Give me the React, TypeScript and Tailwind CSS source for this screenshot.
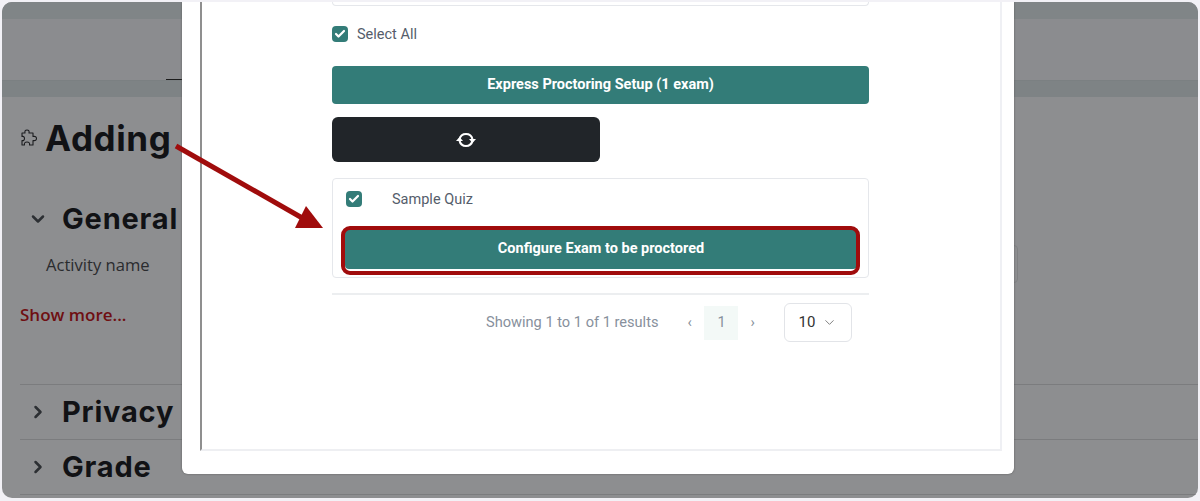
import React from "react";
import { ChevronDown, ChevronRight, Check } from "lucide-react";

const CheckBox = () => (
  <span className="flex h-4 w-4 shrink-0 items-center justify-center rounded-[4px] bg-[#337c78]">
    <Check className="h-[12px] w-[12px] text-white" strokeWidth={4.5} />
  </span>
);

const Section = ({ title, top }: { title: string; top: string }) => (
  <div className={`flex h-[55px] items-center border-t border-[#7b7c7e] ${top}`}>
    <ChevronRight className="ml-[8px] h-[20px] w-[20px] text-[#2c2f33]" strokeWidth={3} />
    <span className="ml-[14px] font-['Inter'] text-[29px] font-bold tracking-[0.8px] text-[#111215]">{title}</span>
  </div>
);

const PuzzleIcon = () => (
  <svg width="18" height="18" viewBox="0 0 18 18" fill="none" stroke="#1c1d20" strokeWidth="1.1" strokeLinejoin="round">
    <path d="M2 4H5C4.5 1.5 5.5 1 7 1C8.5 1 9.5 1.5 9 4H13V7.5C15.5 7 16.5 8 16.5 9.5C16.5 11 15.5 12 13 11.5V16H9.5C10 14 9 13 7 13C5 13 4 14 4.5 16H2V11.5C3.5 12 4.5 11 4.5 9.5C4.5 8 3.5 7 2 7.5Z" />
  </svg>
);

const SyncIcon = () => (
  <svg width="20" height="18" viewBox="0 0 20 18" fill="none">
    <path d="M3.6 8A6.6 6.6 0 0 1 16.4 8" stroke="white" strokeWidth="2.2" />
    <path d="M16.4 10A6.6 6.6 0 0 1 3.6 10" stroke="white" strokeWidth="2.2" />
    <polygon points="13,8 20,8 16.5,12" fill="white" />
    <polygon points="0,10 7,10 3.5,6" fill="white" />
  </svg>
);

const Background = () => (
  <div className="flex h-full flex-col bg-[#8d8e90]">
    <div className="h-[17px] bg-[#808587]" />
    <div className="flex h-[61px] items-end bg-[#8b8c8f]">
      <div className="ml-[164px] h-[1px] w-[20px] bg-[#1c1c1c]" />
    </div>
    <div className="h-[17px] border-t border-[#7b8082] bg-[#7e8385]" />
    <div className="flex flex-col pl-[18px]">
      <div className="mt-[19px] flex items-center">
        <PuzzleIcon />
        <span className="ml-[7px] font-['Inter'] text-[35px] leading-[44px] font-bold tracking-[0.6px] text-[#111215]">Adding</span>
      </div>
      <div className="mt-[37px] flex h-[44px] items-center">
        <ChevronDown className="ml-[8px] h-[20px] w-[20px] text-[#2c2f33]" strokeWidth={3} />
        <span className="ml-[14px] font-['Inter'] text-[29px] font-bold tracking-[0.8px] text-[#111215]">General</span>
      </div>
      <div className="mt-[4px] flex h-[38px] items-center">
        <span className="ml-[26px] pt-[2px] font-['Open_Sans'] text-[16.6px] text-[#2a2b2e]">Activity name</span>
        <div className="ml-[296px] h-[38px] w-[572px] rounded-[4px] border border-[#7f8082]" />
      </div>
      <div className="mt-[20px] font-['Open_Sans'] text-[17px] leading-[24px] font-semibold text-[#6f0f12]">Show more...</div>
      <Section title="Privacy" top="mt-[57px]" />
      <Section title="Grade" top="" />
      <div className="border-t border-[#7b7c7e]" />
    </div>
  </div>
);

const Modal = () => (
  <div className="absolute top-0 left-[180px] h-[472px] w-[832px] rounded-b-[6px] bg-white pl-[18px] font-['Roboto'] shadow-[0_0_2px_#555]">
    <div className="h-[449px] w-[802px] border-r-[2px] border-b-[2px] border-l-[2px] border-r-[#eff0f4] border-b-[#eeeff2] border-l-[#8f8f8f] pl-[130px]">
      <div className="w-[537px]">
        <div className="h-[4px] rounded-b-[4px] border-x border-b border-[#e5e7eb]" />
        <div className="mt-[20px] flex h-[16px] items-center">
          <CheckBox />
          <span className="ml-[9px] pt-[2px] text-[14.5px] text-[#555d6b]">Select All</span>
        </div>
        <button className="mt-[24px] block h-[38px] w-full rounded-[4px] bg-[#337c78] text-[14.5px] font-bold text-white">
          Express Proctoring Setup (1 exam)
        </button>
        <button className="mt-[13px] flex h-[45px] w-[268px] items-center justify-center rounded-[6px] bg-[#212529]">
          <SyncIcon />
        </button>
        <div className="mt-[16px] h-[100px] rounded-[4px] border border-[#e5e7eb]">
          <div className="mt-[12px] ml-[13px] flex h-[16px] items-center">
            <CheckBox />
            <span className="ml-[30px] pt-[2px] text-[14.5px] text-[#555d6b]">Sample Quiz</span>
          </div>
          <button className="mt-[22px] ml-[12px] block h-[40px] w-[512px] rounded-[4px] bg-[#337c78] text-[14.5px] font-bold text-white">
            Configure Exam to be proctored
          </button>
        </div>
        <div className="mt-[15px] flex h-[57px] items-center border-t-2 border-[#eceef0]">
          <span className="ml-[154px] text-[14.6px] text-[#87909c]">Showing 1 to 1 of 1 results</span>
          <span className="ml-[29px] w-[6px] text-[14.5px] text-[#87909c]">‹</span>
          <span className="ml-[11px] flex h-[34px] w-[34px] items-center justify-center bg-[#f3f9f7] text-[14.5px] text-[#87909c]">1</span>
          <span className="ml-[12px] w-[6px] text-[14.5px] text-[#87909c]">›</span>
          <div className="ml-[28px] flex h-[39px] w-[68px] items-center rounded-[6px] border border-[#e2e4e8] pl-[13px] text-[15px] text-[#333]">
            10
            <ChevronDown className="ml-[7px] h-[15px] w-[15px] text-[#777]" strokeWidth={1.5} />
          </div>
        </div>
      </div>
    </div>
  </div>
);

export default function App() {
  return (
    <div className="h-[501px] w-[1200px] overflow-hidden bg-[#f2f1f6] p-[2px]">
      <div className="relative h-[496px] w-[1196px] overflow-hidden rounded-[10px]">
        <Background />
        <Modal />
        {/* annotation layer */}
        <div className="absolute top-[224px] left-[339px] h-[49px] w-[519px] rounded-[9px] border-[4px] border-[#a00c0c]" />
        <svg className="absolute top-[-2px] left-[-2px]" width="400" height="300">
          <line x1="176" y1="146" x2="304" y2="219" stroke="#a00c0c" strokeWidth="5" />
          <polygon points="295,228 306,206 323,228" fill="#a00c0c" />
        </svg>
      </div>
    </div>
  );
}
